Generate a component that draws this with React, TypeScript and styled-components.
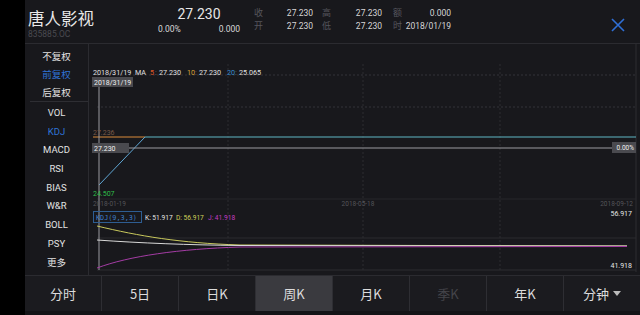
import React from 'react';
import styled, { createGlobalStyle } from 'styled-components';

const GlobalStyle = createGlobalStyle`
  html, body {
    margin: 0;
    padding: 0;
    background: #000;
  }
  body {
    font-family: Roboto, "Noto Sans CJK SC", sans-serif;
  }
`;

const Page = styled.div`
  display: flex;
  width: 640px;
  height: 315px;
  overflow: hidden;
  background: #000;
`;

const Strip = styled.div`
  width: 25px;
  flex-shrink: 0;
  background: #000;
`;

const Main = styled.div`
  flex: 1;
  display: flex;
  flex-direction: column;
  background: #18181c;
`;

const Header = styled.header`
  height: 43px;
  border-bottom: 1px solid #2b2b30;
  display: flex;
  align-items: flex-start;
`;

const NameBlock = styled.div`
  width: 130px;
  padding: 8px 0 0 3px;
  display: flex;
  flex-direction: column;
`;

const StockName = styled.div`
  font-family: "Noto Sans CJK SC", sans-serif;
  font-size: 16.5px;
  line-height: 20px;
  color: #e8e8e8;
`;

const StockCode = styled.div`
  font-size: 8.5px;
  line-height: 12px;
  color: #4a4a50;
`;

const PriceBlock = styled.div`
  width: 82px;
  padding-top: 6px;
  display: flex;
  flex-direction: column;
`;

const Price = styled.div`
  text-align: center;
  font-size: 14px;
  line-height: 17px;
  color: #e6e6e6;
`;

const PriceSub = styled.div`
  display: flex;
  justify-content: space-between;
  font-size: 8.5px;
  line-height: 12px;
  color: #d8d8d8;
`;

const Quotes = styled.div`
  margin-left: 13px;
  padding-top: 6px;
  display: grid;
  grid-template-columns: 10px 50px 18px 51px 20px 49px;
  grid-auto-rows: 13px;
  align-items: center;
`;

const QLabel = styled.span`
  font-family: "Noto Sans CJK SC", sans-serif;
  color: #55555c;
  font-size: 9px;
  text-align: right;
`;

const QValue = styled.span`
  color: #d6d6d6;
  font-size: 8.5px;
  text-align: right;
  white-space: nowrap;
`;

const CloseBtn = styled.div`
  margin: 17px 15px 0 auto;
  width: 14px;
  height: 14px;
`;

const Body = styled.div`
  flex: 1;
  display: flex;
  min-height: 0;
`;

const Sidebar = styled.nav`
  width: 63px;
  flex-shrink: 0;
  border-right: 1px solid #2b2b30;
  padding-top: 3px;
  display: flex;
  flex-direction: column;
`;

const SideItem = styled.div<{ $active?: boolean; $h: number }>`
  height: ${({ $h }) => $h}px;
  display: flex;
  align-items: center;
  justify-content: center;
  font-size: 9.5px;
  color: ${({ $active }) => ($active ? '#2f73d6' : '#e2e2e2')};
`;

const SideDivider = styled.div`
  height: 1px;
  margin: 0 0 1px 5px;
  background: #2e2e33;
`;

const ChartArea = styled.div`
  flex: 1;
`;

const ChartText = styled.text<{ $size?: number; $mono?: boolean }>`
  font-family: ${({ $mono }) => ($mono ? '"DejaVu Sans Mono", monospace' : 'Roboto, sans-serif')};
  font-size: ${({ $size }) => $size ?? 7}px;
`;

const TabBar = styled.div`
  height: 35px;
  border-top: 1px solid #2b2b30;
  border-bottom: 4px solid #141417;
  display: flex;
`;

const Tab = styled.div<{ $active?: boolean; $disabled?: boolean }>`
  flex: 1;
  display: flex;
  align-items: center;
  justify-content: center;
  gap: 4px;
  border-right: 1px solid #2e2e33;
  background: ${({ $active }) => ($active ? '#3a3a3f' : '#1b1b1f')};
  color: ${({ $disabled }) => ($disabled ? '#44444a' : '#dcdcdc')};
  font-family: "Noto Sans CJK SC", sans-serif;
  font-size: 13px;
  &:last-child {
    border-right: none;
  }
`;

const Caret = styled.span`
  width: 0;
  height: 0;
  border-left: 4px solid transparent;
  border-right: 4px solid transparent;
  border-top: 5px solid #bbb;
`;

const sideTop = ['不复权', '前复权', '后复权'];
const sideBottom = ['VOL', 'KDJ', 'MACD', 'RSI', 'BIAS', 'W&R', 'BOLL', 'PSY', '更多'];
const tabs = ['分时', '5日', '日K', '周K', '月K', '季K', '年K', '分钟'];

const quotes = [
  ['收', '27.230', '高', '27.230', '额', '0.000'],
  ['开', '27.230', '低', '27.230', '时', '2018/01/19'],
];

const Chart: React.FC = () => (
  <svg width="551" height="231" viewBox="0 0 551 231">
    {/* frame and grid */}
    <line x1="547" y1="0" x2="547" y2="228" stroke="#2c2c31" />
    <line x1="8" y1="31" x2="547" y2="31" stroke="#333338" strokeDasharray="2 2" />
    <line x1="8" y1="63" x2="547" y2="63" stroke="#333338" strokeDasharray="2 2" />
    <line x1="8" y1="155" x2="547" y2="155" stroke="#26262b" />
    <line x1="8" y1="194" x2="547" y2="194" stroke="#2a2a2f" />
    <line x1="8" y1="226" x2="547" y2="226" stroke="#2c2c31" />
    {[139, 274, 411].map((x) => (
      <line key={x} x1={x} y1="20" x2={x} y2="226" stroke="#2c2c31" strokeDasharray="2 2" />
    ))}

    {/* MA legend */}
    <ChartText x="4" y="31" fill="#e0e0e0" $size={7.2}>2018/31/19</ChartText>
    <ChartText x="46" y="31" fill="#e0e0e0" $size={7.2}>MA</ChartText>
    <ChartText x="61" y="31" fill="#e0592a" $size={7.2}>5</ChartText>
    <ChartText x="66" y="31" fill="#777" $size={7.2}>:</ChartText>
    <ChartText x="70" y="31" fill="#e0e0e0" $size={7.2}>27.230</ChartText>
    <ChartText x="98" y="31" fill="#d9a437" $size={7.2}>10</ChartText>
    <ChartText x="106" y="31" fill="#777" $size={7.2}>:</ChartText>
    <ChartText x="110" y="31" fill="#e0e0e0" $size={7.2}>27.230</ChartText>
    <ChartText x="138" y="31" fill="#3a8fd0" $size={7.2}>20</ChartText>
    <ChartText x="146" y="31" fill="#777" $size={7.2}>:</ChartText>
    <ChartText x="150" y="31" fill="#e0e0e0" $size={7.2}>25.065</ChartText>

    {/* price lines */}
    <line x1="4" y1="93" x2="56" y2="93" stroke="#d98a3a" />
    <line x1="56" y1="93" x2="547" y2="93" stroke="#5fb6c4" />
    <line x1="10" y1="141" x2="56" y2="93" stroke="#5fa6d4" />

    {/* crosshair */}
    <line x1="10" y1="34" x2="10" y2="226" stroke="#9a9aa0" />
    <line x1="8" y1="104" x2="523" y2="104" stroke="#9a9aa0" />

    <rect x="3" y="33" width="41" height="10" fill="#4a4a4f" />
    <ChartText x="5" y="41" fill="#f0f0f0">2018/31/19</ChartText>

    <ChartText x="4" y="91" fill="#7a5a48">27.236</ChartText>
    <rect x="3" y="99" width="37" height="10" fill="#4a4a4f" />
    <ChartText x="5" y="107" fill="#f0f0f0">27.230</ChartText>
    <rect x="523" y="98" width="24" height="11" fill="#4a4a4f" />
    <ChartText x="545" y="106" fill="#f0f0f0" textAnchor="end" $size={6.5}>0.00%</ChartText>

    <ChartText x="4" y="152" fill="#2fbf4a">24.507</ChartText>
    <ChartText x="4" y="162" fill="#55555a" $size={6.5}>2018-01-19</ChartText>
    <ChartText x="269" y="162" fill="#55555a" textAnchor="middle" $size={6.5}>2018-05-18</ChartText>
    <ChartText x="544" y="162" fill="#55555a" textAnchor="end" $size={6.5}>2018-09-12</ChartText>
    <ChartText x="543" y="172" fill="#e6e6e6" textAnchor="end">56.917</ChartText>

    {/* KDJ legend */}
    <rect x="4.5" y="167.5" width="48" height="11" fill="none" stroke="#2e5d92" />
    <ChartText x="7" y="176" fill="#3e7ec8" $mono $size={6.8}>KDJ(9,3,3)</ChartText>
    <ChartText x="56" y="176" fill="#e6e6e6" $size={6.6}>K: 51.917</ChartText>
    <ChartText x="87" y="176" fill="#cfd05a" $size={6.6}>D: 56.917</ChartText>
    <ChartText x="119" y="176" fill="#c43cc4" $size={6.6}>J: 41.918</ChartText>

    {/* KDJ lines */}
    <path d="M8 182 C 50 192, 90 199, 151 201 L 538 202" fill="none" stroke="#c8c85c" />
    <path d="M8 196 C 50 199, 100 201, 151 201.5 L 538 202" fill="none" stroke="#d8d8d8" />
    <path d="M8 224 C 40 212, 90 205, 151 203 L 538 202.5" fill="none" stroke="#a43ca4" />

    <ChartText x="543" y="224" fill="#e6e6e6" textAnchor="end">41.918</ChartText>
  </svg>
);

const App: React.FC = () => (
  <>
    <GlobalStyle />
    <Page>
      <Strip />
      <Main>
        <Header>
          <NameBlock>
            <StockName>唐人影视</StockName>
            <StockCode>835885.OC</StockCode>
          </NameBlock>
          <PriceBlock>
            <Price>27.230</Price>
            <PriceSub>
              <span>0.00%</span>
              <span>0.000</span>
            </PriceSub>
          </PriceBlock>
          <Quotes>
            {quotes.flat().map((q, i) =>
              i % 2 === 0 ? <QLabel key={i}>{q}</QLabel> : <QValue key={i}>{q}</QValue>
            )}
          </Quotes>
          <CloseBtn>
            <svg width="14" height="14" viewBox="0 0 14 14">
              <path d="M1 1 L13 13 M13 1 L1 13" stroke="#2f6fd6" strokeWidth="1.6" />
            </svg>
          </CloseBtn>
        </Header>
        <Body>
          <Sidebar>
            {sideTop.map((s) => (
              <SideItem key={s} $h={18} $active={s === '前复权'}>{s}</SideItem>
            ))}
            <SideDivider />
            {sideBottom.map((s) => (
              <SideItem key={s} $h={18.7} $active={s === 'KDJ'}>{s}</SideItem>
            ))}
          </Sidebar>
          <ChartArea>
            <Chart />
          </ChartArea>
        </Body>
        <TabBar>
          {tabs.map((t) => (
            <Tab key={t} $active={t === '周K'} $disabled={t === '季K'}>
              {t}
              {t === '分钟' && <Caret />}
            </Tab>
          ))}
        </TabBar>
      </Main>
    </Page>
  </>
);

export default App;
